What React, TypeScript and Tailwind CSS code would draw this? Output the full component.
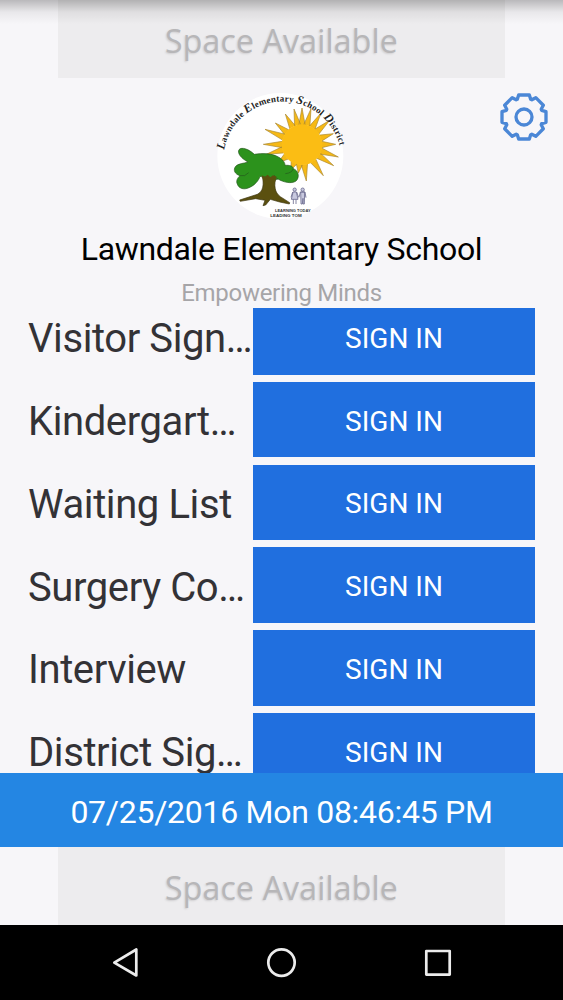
const ROWS = [
  "Visitor Sign…",
  "Kindergart…",
  "Waiting List",
  "Surgery Co…",
  "Interview",
  "District Sig…",
];

const SUN = { x: 279, y: 179, r: 60 };
const RAY_TIPS = [
  [163, 178], [168, 133], [199, 114], [229, 87], [255, 72], [279, 69],
  [306, 71], [336, 84], [362, 106], [373, 146], [380, 178],
  [388, 216], [374, 242], [343, 272], [292, 288], [268, 264], [246, 254],
  [206, 234], [172, 208],
];

const sunPath = RAY_TIPS.map(([x, y]) => {
  const angle = Math.atan2(y - SUN.y, x - SUN.x);
  const a = [angle - 0.16, angle + 0.16].map(
    (t) => `${SUN.x + SUN.r * Math.cos(t)} ${SUN.y + SUN.r * Math.sin(t)}`
  );
  return `M${a[0]}L${x} ${y}L${a[1]}`;
}).join("");

const gearPath =
  Array.from({ length: 8 }, (_, i) => {
    const t = (i * Math.PI) / 4;
    return [
      [-20, -53],
      [-16, -66],
      [16, -66],
      [20, -53],
    ]
      .map(([x, y], j) => {
        const px = x * Math.cos(t) - y * Math.sin(t);
        const py = x * Math.sin(t) + y * Math.cos(t);
        return `${i === 0 && j === 0 ? "M" : "L"}${px} ${py}`;
      })
      .join("");
  }).join("") + "Z";

const Gear = () => (
  <svg viewBox="-75 -75 150 150" className="h-[50px] w-[50px]">
    <g fill="none" stroke="#4b87d6" strokeWidth="10" strokeLinejoin="round">
      <path d={gearPath} />
      <circle r="24" />
    </g>
  </svg>
);

const Logo = () => (
  <svg viewBox="0 0 435 435" className="h-[145px] w-[145px]">
    <circle cx="214" cy="213" r="189" fill="#fff" />
    <path d={sunPath} fill="#f6b915" stroke="#a88732" strokeWidth="2" />
    <circle cx={SUN.x} cy={SUN.y} r={SUN.r + 1} fill="#fbbd14" />
    <path id="arc" d="M45 195A178 178 0 0 1 395 195" fill="none" />
    <text
      className="font-['Liberation_Serif',serif]"
      fontSize="27"
      fontWeight="bold"
      fill="#222"
    >
      <textPath href="#arc" textLength="480">
        <tspan fontSize="36" fontStyle="italic">L</tspan>awndale{" "}
        <tspan fontSize="36" fontStyle="italic">E</tspan>lementary{" "}
        <tspan fontSize="36" fontStyle="italic">S</tspan>chool{" "}
        <tspan fontSize="36" fontStyle="italic">D</tspan>istrict
      </textPath>
    </text>
    <path
      d="M160 272C165 300 163 318 145 328L92 345L94 349L140 341L168 346L162 362L170 360L184 343L212 351L241 357L242 353L214 335C197 323 193 300 203 272Z"
      fill="#5b500f"
      stroke="#3c3510"
      strokeWidth="2"
    />
    <path
      d="M117 231C96 220 84 204 90 194C98 185 119 192 136 208C161 204 189 205 208 216C224 225 228 234 228 241C242 240 252 243 253 251C270 257 272 278 261 288C247 298 222 291 207 282C193 288 181 285 178 275C166 277 158 276 153 274C149 287 137 301 120 308C103 316 88 309 85 297C80 288 86 278 93 272C78 268 71 255 80 244C88 235 103 236 117 231Z"
      fill="#2c921c"
      stroke="#24561d"
      strokeWidth="2"
    />
    <path
      d="M93 272Q108 276 119 263M207 282Q197 278 195 270M253 251Q249 264 229 266"
      fill="none"
      stroke="#24561d"
      strokeWidth="2"
    />
    <path d="M158 271L168 275L176 269L184 277L192 271L203 275L196 295H165Z" fill="#5b500f" />
    <g fill="#c8c9df" stroke="#6d6e90" strokeWidth="2.5">
      <circle cx="257" cy="314" r="5" />
      <path d="M251 321L246 337M263 321L269 337M252 321H262L267 343H247ZM253 343V357M261 343V357" />
      <circle cx="281" cy="314" r="5" />
      <path d="M274 321H288L291 338M274 321L270 337M275 321H287L286 357H282V340L280 357H276Z" />
    </g>
    <g className="font-['Liberation_Sans',sans-serif]" fontSize="11" fill="#333" fontWeight="bold">
      <text x="198" y="382" textLength="107" lengthAdjust="spacingAndGlyphs">
        LEARNING TODAY
      </text>
      <text x="184" y="396" textLength="94" lengthAdjust="spacingAndGlyphs">
        LEADING TOM
      </text>
    </g>
  </svg>
);

const Banner = () => (
  <div className="mx-auto flex h-[78px] w-[447px] shrink-0 items-center justify-center bg-[#edecee] pt-[3px] font-['Open_Sans',sans-serif] text-[32px] font-medium tracking-[0.2px] text-[#b7b6b8] [text-shadow:-1px_1px_2px_#cfced0]">
    Space Available
  </div>
);

const App = () => {
  return (
    <div className="flex h-[1000px] w-[563px] flex-col overflow-hidden bg-[#f7f6f9] font-[Roboto,sans-serif]">
      <div className="relative">
        <Banner />
        <div className="absolute inset-x-0 top-0 h-6 bg-linear-to-b from-black/25 via-black/6 to-transparent" />
      </div>
      <header className="h-[230px] shrink-0 text-center">
        <div className="grid grid-cols-[1fr_145px_1fr] pt-[7px]">
          <div />
          <Logo />
          <div className="flex justify-end pt-[7px] pr-[14px]">
            <Gear />
          </div>
        </div>
        <h1 className="mt-px text-[32px] leading-9 tracking-[-0.32px] text-black">
          Lawndale Elementary School
        </h1>
        <p className="mt-3 text-2xl leading-7 tracking-[-0.3px] text-[#a6a5a8]">
          Empowering Minds
        </p>
      </header>
      <main className="h-[465px] shrink-0 overflow-hidden">
        <div className="-mt-[9px] flex flex-col gap-[7.3px] pr-7 pl-7">
          {ROWS.map((label) => (
            <div key={label} className="flex h-[75.5px] shrink-0 items-center">
              <div className="w-[225px] pt-[5px] text-[40px] tracking-[-0.4px] whitespace-nowrap text-[#333236]">
                {label}
              </div>
              <button className="h-full flex-1 bg-[#206fdf] pt-1 text-[28px] text-white">
                SIGN IN
              </button>
            </div>
          ))}
        </div>
      </main>
      <div className="flex h-[74px] shrink-0 items-center justify-center bg-[#2486e3] pt-[3px] text-[32px] tracking-[-0.28px] text-white">
        07/25/2016 Mon 08:46:45 PM
      </div>
      <Banner />
      <nav className="flex h-[75px] shrink-0 items-center justify-center bg-black">
        <svg viewBox="0 0 563 75" className="h-[75px] w-[563px]">
          <g fill="none" stroke="#ececec" strokeWidth="2.7" strokeLinejoin="round">
            <path d="M136.300 24.500V50.500L114.300 37.700Z" />
            <circle cx="281.500" cy="37.600" r="13.200" />
            <rect x="426.300" y="26" width="23.400" height="23.600" />
          </g>
        </svg>
      </nav>
    </div>
  );
};

export default App;
